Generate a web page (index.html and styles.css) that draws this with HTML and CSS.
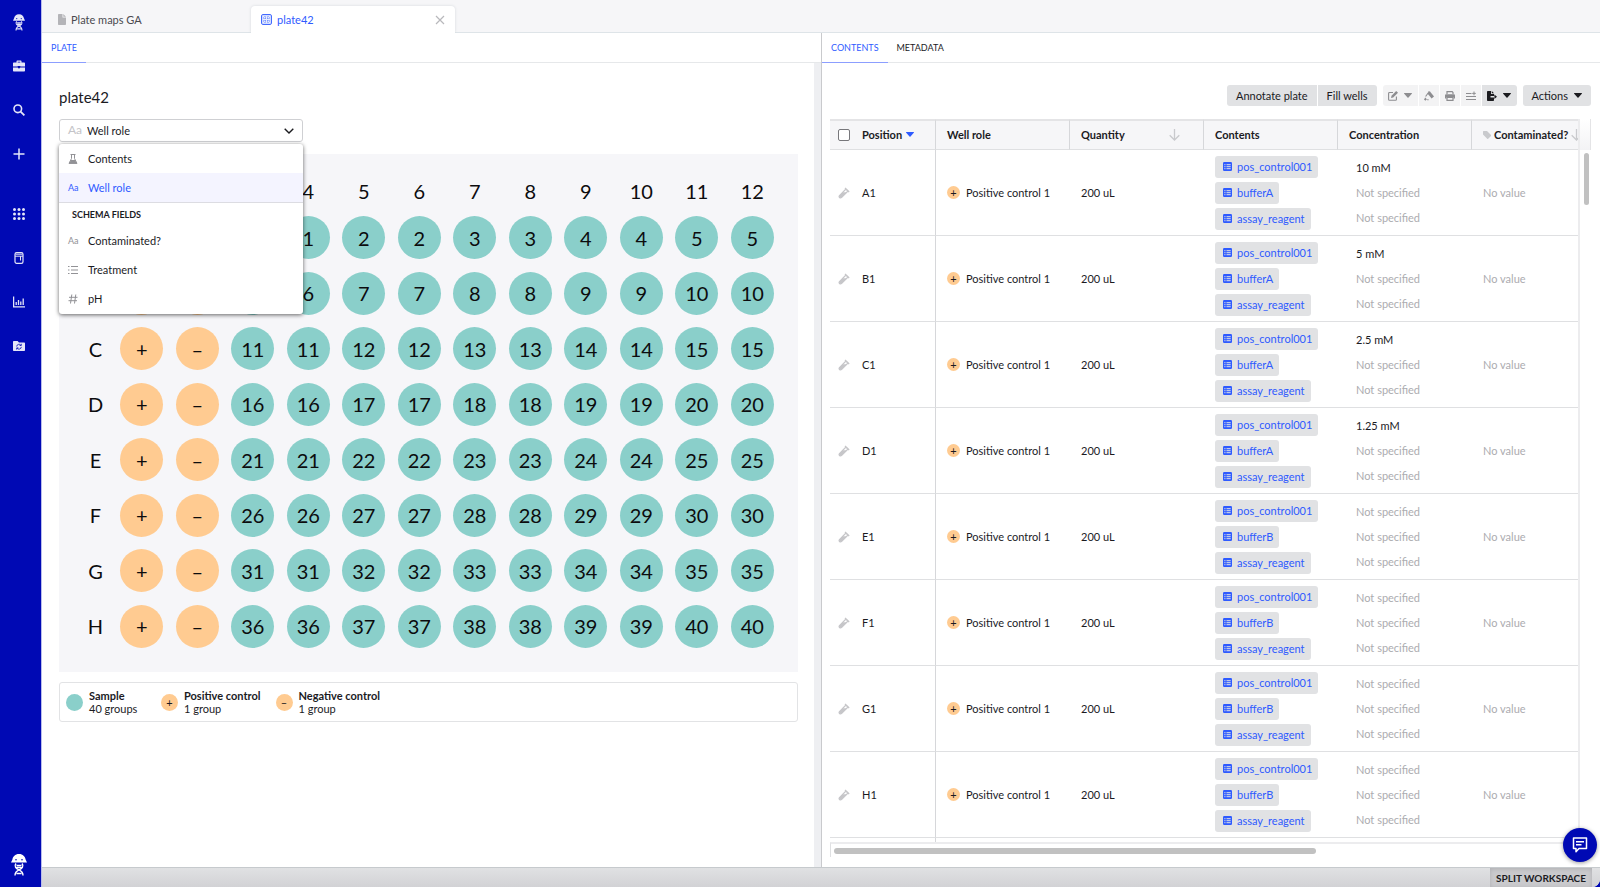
FILE: index.html
```
<!DOCTYPE html>
<html lang="en">
  <head>
    <meta charset="UTF-8" />
    <meta name="viewport" content="width=device-width, initial-scale=1" />
    <title>plate42</title>
    <link rel="stylesheet" href="styles.css">
  </head>
  <body>
    <!-- Icon sprite -->
    <svg class="sprite" aria-hidden="true">
      <symbol id="icon-jelly" viewBox="0 0 16 22">
        <path d="M8 0C4 0 2 2.600 1.400 5.400L0 8.600h16l-1.400-3.200C14 2.600 12 0 8 0z" fill="currentColor" />
        <circle cx="5" cy="5.800" r="0.800" fill="#0009b4" />
        <circle cx="11" cy="5.800" r="0.800" fill="#0009b4" />
        <path d="M5 9.500c-2.400 3 .2 5 3 6.300s4 2.700 4 5.700M11 9.500c2.400 3-.2 5-3 6.300s-4 2.700-4 5.700M5.500 11.500h5M5.500 13.500h5M5.500 19.500h5" fill="none" stroke="currentColor" stroke-width="1.400" />
      </symbol>
      <symbol id="icon-briefcase" viewBox="0 0 12 11">
        <path d="M3.500 2V1c0-.6.400-1 1-1h3c.6 0 1 .4 1 1v1H11c.6 0 1 .4 1 1v3H7.300V5.500H4.700V6H0V3c0-.6.400-1 1-1zM4.700 2h2.600v-.8H4.700zM0 7h4.700l1.300 1.200L7.300 7H12v3c0 .6-.4 1-1 1H1c-.6 0-1-.4-1-1z" fill="currentColor" />
      </symbol>
      <symbol id="icon-search" viewBox="0 0 12 12">
        <circle cx="4.800" cy="4.800" r="3.800" fill="none" stroke="currentColor" stroke-width="1.600" />
        <path d="M7.600 7.600l3.800 3.800" stroke="currentColor" stroke-width="1.800" />
      </symbol>
      <symbol id="icon-plus" viewBox="0 0 12 12">
        <path d="M6 .5v11M.5 6h11" stroke="currentColor" stroke-width="1.500" />
      </symbol>
      <symbol id="icon-grid" viewBox="0 0 12 12">
        <g fill="currentColor">
          <circle cx="1.500" cy="1.500" r="1.500" /><circle cx="6" cy="1.500" r="1.500" /><circle cx="10.500" cy="1.500" r="1.500" />
          <circle cx="1.500" cy="6" r="1.500" /><circle cx="6" cy="6" r="1.500" /><circle cx="10.500" cy="6" r="1.500" />
          <circle cx="1.500" cy="10.500" r="1.500" /><circle cx="6" cy="10.500" r="1.500" /><circle cx="10.500" cy="10.500" r="1.500" />
        </g>
      </symbol>
      <symbol id="icon-fridge" viewBox="0 0 12 12">
        <rect x="2" y=".6" width="8" height="10.800" rx="1.600" fill="none" stroke="currentColor" stroke-width="1.200" />
        <path d="M2 4.200h8M7.500 4.200v4.300M2.500 2.200h7" fill="none" stroke="currentColor" />
      </symbol>
      <symbol id="icon-chart" viewBox="0 0 12 11">
        <path d="M.6 0v10.300H12M3.200 8.500V5.500M5.500 8.500V3.500M7.800 8.500V5M10.200 8.500V2" fill="none" stroke="currentColor" stroke-width="1.300" />
      </symbol>
      <symbol id="icon-folder" viewBox="0 0 12 11">
        <path d="M1 .5h3.600L6 2h5c.6 0 1 .4 1 1v6.500c0 .6-.4 1-1 1H1c-.6 0-1-.4-1-1v-8c0-.6.400-1 1-1z" fill="currentColor" />
        <path d="M3.700 6a2.300 2.300 0 0 1 4.200-1.200M8.300 6.400a2.300 2.300 0 0 1-4.200 1.200M8.300 3.300v1.700H6.600M3.700 9.100V7.400h1.700" fill="none" stroke="#0009b4" stroke-width=".8" />
      </symbol>
      <symbol id="icon-file" viewBox="0 0 8 11">
        <path d="M1 0h3.500v3.500H8V10c0 .6-.4 1-1 1H1c-.6 0-1-.4-1-1V1c0-.6.400-1 1-1zM5.300 0L8 2.700H5.300z" fill="currentColor" />
      </symbol>
      <symbol id="icon-plate" viewBox="0 0 11 11">
        <rect x=".6" y=".6" width="9.800" height="9.800" rx="1.200" fill="#e6ecff" stroke="currentColor" />
        <path d="M4 2v7M7 2v7M2 4h7M2 7h7" stroke="currentColor" stroke-width=".7" stroke-dasharray="1 1" />
      </symbol>
      <symbol id="icon-close" viewBox="0 0 10 10">
        <path d="M1 1l8 8M9 1L1 9" stroke="currentColor" stroke-width="1.200" />
      </symbol>
      <symbol id="icon-chevron" viewBox="0 0 10 6">
        <path d="M.7.7L5 5 9.300.7" fill="none" stroke="currentColor" stroke-width="1.400" />
      </symbol>
      <symbol id="icon-flask" viewBox="0 0 10 10">
        <path d="M2.500.5h5M3.500.5v4L1 9.400h8L6.500 4.500v-4" fill="none" stroke="currentColor" />
        <path d="M3 6h4l2 3.500H1z" fill="currentColor" />
      </symbol>
      <symbol id="icon-list" viewBox="0 0 10 10">
        <path d="M0 1.500h1.500M3 1.500h7M0 5h1.500M3 5h7M0 8.500h1.500M3 8.500h7" stroke="currentColor" stroke-width="1.100" />
      </symbol>
      <symbol id="icon-hash" viewBox="0 0 10 10">
        <path d="M3.800.5l-1.300 9M7.800.5l-1.300 9M1 3.300h8.500M.5 6.700H9" stroke="currentColor" />
      </symbol>
      <symbol id="icon-edit" viewBox="0 0 10 10">
        <path d="M5 1.500H1.500c-.5 0-.9.400-.9.900v6c0 .5.400.9.900.9h6c.5 0 .9-.4.900-.9V5.500" fill="none" stroke="currentColor" stroke-width="1.100" />
        <path d="M8.200 0L10 1.800 5.200 6.500l-2.200.5.500-2.200z" fill="currentColor" />
      </symbol>
      <symbol id="icon-caret" viewBox="0 0 8 5">
        <path d="M.5 0h7c.5 0 .6.400.3.700L4.500 4.600c-.3.300-.7.300-1 0L.2.700C-.1.400 0 0 .5 0z" fill="currentColor" />
      </symbol>
      <symbol id="icon-dropper" viewBox="0 0 10 10">
        <path d="M4.300.6C5 0 5.700.1 6.200.7L10 5.600 7.600 7.600 3.900 3z" fill="currentColor" />
        <path d="M4.300 1.800L1.600 5.500M0 8.200h2.800M1.400 6.800v2.800M3.200 8.800h1.400" fill="none" stroke="currentColor" stroke-width="1.100" />
      </symbol>
      <symbol id="icon-print" viewBox="0 0 10 10">
        <path d="M2 3V.6h5.200L8 1.500V3M2 6.500h6v2.900H2z" fill="none" stroke="currentColor" stroke-width="1.200" />
        <path d="M1.300 3.300h7.400c.7 0 1.300.5 1.300 1.200V7.500H8.500V6h-7v1.500H0v-3c0-.7.600-1.200 1.300-1.200z" fill="currentColor" />
      </symbol>
      <symbol id="icon-addrow" viewBox="0 0 10 10">
        <path d="M0 2.500h5.500M0 5.500h10M0 8.500h10M8 .5v3.800M6.200 2.400h3.600" stroke="currentColor" />
      </symbol>
      <symbol id="icon-export" viewBox="0 0 10 10">
        <path d="M.8 0H4v3h3v2H3.500v1.600H7V9.200c0 .5-.3.800-.8.800H.8C.3 10 0 9.700 0 9.200V.8C0 .3.300 0 .8 0zM4.800 0L7 2.200H4.800zM7.400 3.600L10 5.800 7.400 8z" fill="currentColor" />
      </symbol>
      <symbol id="icon-arrow" viewBox="0 0 11 12">
        <path d="M5.500 0v11M.7 6.300l4.800 4.700 4.800-4.700" fill="none" stroke="currentColor" stroke-width="1.300" />
      </symbol>
      <symbol id="icon-tag" viewBox="0 0 8 8">
        <path d="M.6 0H4l4 4c.3.300.3.600 0 .9L5.200 7.700c-.3.300-.7.300-1 0L0 3.600V.6C0 .3.300 0 .6 0z" fill="currentColor" />
      </symbol>
      <symbol id="icon-tube" viewBox="0 0 12 12">
        <path d="M7.200 1.300l3.500 3.500M8 2L1.700 8.300c-1.500 1.600.5 3.500 2 2L10 4" fill="none" stroke="currentColor" stroke-width="1.200" />
        <path d="M5 5.200h4L3.500 10.500c-1.500 1-3-.5-2-2z" fill="currentColor" />
        <path d="M7 .8l4.200 4.200" stroke="currentColor" stroke-width="1.200" />
      </symbol>
      <symbol id="icon-entity" viewBox="0 0 9 9">
        <rect width="9" height="9" rx="1.200" fill="currentColor" />
        <path d="M1.300 2.700h1.200M3.500 2.700h4.200M1.300 4.700h1.200M3.500 4.700h4.200M1.300 6.700h1.200M3.500 6.700h4.200" stroke="#e1e2e4" />
      </symbol>
      <symbol id="icon-chat" viewBox="0 0 16 16">
        <path d="M1.500 1h13v10.500H7L4 14.700v-3.200H1.500z" fill="none" stroke="currentColor" stroke-width="1.500" stroke-linejoin="round" />
        <path d="M4 4.800h8M4 7.700h5.500" stroke="currentColor" stroke-width="1.400" />
      </symbol>
    </svg>

    <div class="app">
      <nav class="sidebar">
        <a href="#home" aria-label="Home"><svg class="logo"><use href="#icon-jelly" /></svg></a>
        <a href="#projects" aria-label="Projects"><svg><use href="#icon-briefcase" /></svg></a>
        <a href="#search" aria-label="Search"><svg><use href="#icon-search" /></svg></a>
        <a href="#create" aria-label="Create"><svg><use href="#icon-plus" /></svg></a>
        <a href="#apps" aria-label="Applications" class="spaced"><svg><use href="#icon-grid" /></svg></a>
        <a href="#inventory" aria-label="Inventory"><svg><use href="#icon-fridge" /></svg></a>
        <a href="#insights" aria-label="Insights"><svg><use href="#icon-chart" /></svg></a>
        <a href="#registry" aria-label="Registry"><svg><use href="#icon-folder" /></svg></a>
        <a href="#account" aria-label="Account" class="account"><svg><use href="#icon-jelly" /></svg></a>
      </nav>

      <div class="workspace">
        <header class="file-tabs">
          <a href="#maps" class="file-tab"><svg class="icon-file"><use href="#icon-file" /></svg>Plate maps GA</a>
          <div class="file-tab active">
            <a href="#plate42"><svg class="icon-plate"><use href="#icon-plate" /></svg>plate42</a>
            <button class="close" aria-label="Close tab"><svg><use href="#icon-close" /></svg></button>
          </div>
        </header>

        <main class="panes">
          <section class="pane">
            <nav class="pane-tabs"><a href="#plate" class="active">PLATE</a></nav>
            <div class="plate-pane">
              <h1>plate42</h1>
              <div class="picker">
                <span class="aa" aria-hidden="true">Aa</span>
                <select id="colour-by" aria-label="Show on plate">
                  <option>Well role</option>
                </select>
                <svg class="chevron"><use href="#icon-chevron" /></svg>
                <div class="menu">
                  <button><svg><use href="#icon-flask" /></svg>Contents</button>
                  <button class="selected"><span class="aa">Aa</span>Well role</button>
                  <h2>SCHEMA FIELDS</h2>
                  <button><span class="aa">Aa</span>Contaminated?</button>
                  <button><svg><use href="#icon-list" /></svg>Treatment</button>
                  <button><svg><use href="#icon-hash" /></svg>pH</button>
                </div>
              </div>
              <div class="plate" id="plate"></div>
              <div class="legend">
                <div class="legend-item"><span class="dot sample"></span><p><b>Sample</b><br>40 groups</p></div>
                <div class="legend-item"><span class="dot">+</span><p><b>Positive control</b><br>1 group</p></div>
                <div class="legend-item"><span class="dot">–</span><p><b>Negative control</b><br>1 group</p></div>
              </div>
            </div>
          </section>

          <section class="pane right">
            <nav class="pane-tabs">
              <a href="#contents" class="active">CONTENTS</a>
              <a href="#metadata">METADATA</a>
            </nav>
            <div class="toolbar">
              <div class="group">
                <button>Annotate plate</button>
                <button>Fill wells</button>
              </div>
              <div class="group">
                <button class="off wide" aria-label="Edit"><svg><use href="#icon-edit" /></svg><svg class="caret"><use href="#icon-caret" /></svg></button>
                <button class="off" aria-label="Transfer"><svg><use href="#icon-dropper" /></svg></button>
                <button class="off" aria-label="Print"><svg><use href="#icon-print" /></svg></button>
                <button class="off" aria-label="Add rows"><svg><use href="#icon-addrow" /></svg></button>
                <button class="wide" aria-label="Export"><svg><use href="#icon-export" /></svg><svg class="caret"><use href="#icon-caret" /></svg></button>
              </div>
              <button>Actions<svg class="caret"><use href="#icon-caret" /></svg></button>
            </div>
            <div class="table-area">
              <div class="table-scroll">
                <table>
                  <thead>
                    <tr>
                      <th class="position"><div><input type="checkbox" aria-label="Select all wells" />Position<svg class="caret"><use href="#icon-caret" /></svg></div></th>
                      <th>Well role</th>
                      <th><div>Quantity<svg class="arrow"><use href="#icon-arrow" /></svg></div></th>
                      <th>Contents</th>
                      <th>Concentration</th>
                      <th><div><svg class="tag"><use href="#icon-tag" /></svg>Contaminated?<svg class="arrow"><use href="#icon-arrow" /></svg></div></th>
                    </tr>
                  </thead>
                  <tbody id="rows"></tbody>
                </table>
              </div>
              <div class="v-track"><div class="corner"></div><div class="v-thumb"></div></div>
            </div>
            <div class="h-track"><div class="h-thumb"></div></div>
          </section>
        </main>

        <footer class="status-bar"><button>SPLIT WORKSPACE</button></footer>
      </div>
    </div>
    <button class="chat" aria-label="Open chat"><svg><use href="#icon-chat" /></svg></button>

    <script>
      const plate = document.getElementById("plate");
      let cells = "<span></span>";
      for (let col = 1; col <= 12; col++) {
        // the first three headings sit under the open menu
        cells += `<span class="label">${col > 3 ? col : ""}</span>`;
      }
      "ABCDEFGH".split("").forEach((letter, r) => {
        const covered = r < 2;
        cells += `<span class="label">${covered ? "" : letter}</span>`;
        cells += `<span class="cell"><span class="well control">${covered ? "" : "+"}</span></span>`;
        cells += `<span class="cell"><span class="well control">${covered ? "" : "–"}</span></span>`;
        // each sample group fills two neighbouring wells
        for (let i = 0; i < 10; i++) {
          const group = r * 5 + Math.floor(i / 2) + 1;
          cells += `<span class="cell"><span class="well">${covered && i === 0 ? "" : group}</span></span>`;
        }
      });
      plate.innerHTML = cells;

      const wells = [
        { pos: "A1", buffer: "bufferA", conc: "10 mM" },
        { pos: "B1", buffer: "bufferA", conc: "5 mM" },
        { pos: "C1", buffer: "bufferA", conc: "2.5 mM" },
        { pos: "D1", buffer: "bufferA", conc: "1.25 mM" },
        { pos: "E1", buffer: "bufferB" },
        { pos: "F1", buffer: "bufferB" },
        { pos: "G1", buffer: "bufferB" },
        { pos: "H1", buffer: "bufferB" },
      ];

      function chip(name) {
        return `<a href="#${name}" class="chip"><svg><use href="#icon-entity" /></svg>${name}</a>`;
      }

      document.getElementById("rows").innerHTML = wells
        .map(
          (well) => `
        <tr>
          <td class="position"><div><svg class="tube"><use href="#icon-tube" /></svg>${well.pos}</div></td>
          <td><div><span class="dot small">+</span>Positive control 1</div></td>
          <td>200 uL</td>
          <td><div class="chips">${chip("pos_control001")}${chip(well.buffer)}${chip("assay_reagent")}</div></td>
          <td class="conc">
            <p class="${well.conc ? "" : "empty"}">${well.conc || "Not specified"}</p>
            <p class="empty">Not specified</p>
            <p class="empty">Not specified</p>
          </td>
          <td class="empty">No value</td>
        </tr>`
        )
        .join("") + `<tr class="next"><td class="position"></td><td></td><td></td><td></td><td></td><td></td></tr>`;
    </script>
  </body>
</html>
```
FILE: styles.css
```
* {
  margin: 0;
  padding: 0;
  box-sizing: border-box;
}
body {
  font-family: Lato, "Liberation Sans", sans-serif;
  font-size: 11px;
  color: #1b1b1f;
  background: #0009b4;
}
a {
  color: inherit;
  text-decoration: none;
}
button,
select {
  font: inherit;
  color: inherit;
  border: none;
  background: none;
  cursor: pointer;
}
svg {
  display: block;
  flex: none;
}
.sprite {
  position: absolute;
  width: 0;
  height: 0;
}

.app {
  display: flex;
  height: 100vh;
}

/* Sidebar */
.sidebar {
  width: 42px;
  padding: 0 3px 10px 0;
  display: flex;
  flex-direction: column;
  background: #0009b4;
  border-right: 1px solid #b9bcec;
  color: #e4e6f8;
}
.sidebar a {
  height: 44px;
  display: grid;
  place-items: center;
}
.sidebar svg {
  width: 12px;
  height: 12px;
}
.sidebar .logo {
  width: 12px;
  height: 17px;
}
.sidebar .spaced {
  margin-top: 16px;
}
.sidebar .account {
  margin-top: auto;
  height: 24px;
  color: white;
}
.sidebar .account svg {
  width: 16px;
  height: 22px;
}

.workspace {
  flex: 1;
  min-width: 0;
  display: flex;
  flex-direction: column;
  background: white;
  border-bottom-right-radius: 8px;
  overflow: hidden;
}

/* File tabs */
.file-tabs {
  height: 33px;
  flex: none;
  display: flex;
  align-items: flex-end;
  background: #f6f6f8;
  border-bottom: 1px solid #dee4e8;
}
.file-tab {
  width: 209px;
  height: 26px;
  padding: 0 16px;
  display: flex;
  align-items: center;
  color: #4a4a50;
}
.icon-file {
  width: 8px;
  height: 11px;
  margin-right: 5px;
  color: #b4b4b8;
}
.file-tab.active {
  width: 204px;
  height: 27px;
  margin-bottom: -1px;
  padding: 0 10px;
  justify-content: space-between;
  background: white;
  color: #2f5bff;
  border-radius: 4px 4px 0 0;
  box-shadow: 0 0 3px #d4d8dc;
  clip-path: inset(-4px -4px 0 -4px);
}
.file-tab.active a {
  display: flex;
  align-items: center;
}
.icon-plate {
  width: 11px;
  height: 11px;
  margin-right: 5px;
}
.close {
  color: #b8b8bc;
}
.close svg {
  width: 10px;
  height: 10px;
}

/* Panes */
.panes {
  flex: 1;
  min-height: 0;
  display: grid;
  grid-template-columns: 1fr 1fr;
}
.pane {
  min-width: 0;
  min-height: 0;
  display: flex;
  flex-direction: column;
}
.pane.right {
  border-left: 1px solid #c9cacd;
}
.pane-tabs {
  height: 30px;
  flex: none;
  display: flex;
  border-bottom: 1px solid #e6e8ea;
  font-size: 9px;
}
.pane-tabs a {
  height: 30px;
  padding: 0 9px;
  line-height: 30px;
}
.pane-tabs .active {
  color: #2f5bff;
  border-bottom: 1px solid #8c9eff;
}

.plate-pane {
  flex: 1;
  padding: 24px 16px 0 17px;
  border-right: 7px solid #eeeff2;
}
.plate-pane h1 {
  font-size: 15px;
  line-height: 20px;
  font-weight: normal;
}

.picker {
  position: relative;
  width: 244px;
  height: 23px;
  margin: 12px 0;
}
.picker select {
  width: 100%;
  height: 100%;
  padding: 0 27px;
  appearance: none;
  border: 1px solid #cfd0d3;
  border-radius: 3px;
  background: white;
}
.picker > .aa {
  position: absolute;
  left: 9px;
  top: 3px;
  font-size: 12px;
  color: #c4c4c8;
}
.chevron {
  position: absolute;
  right: 9px;
  top: 9px;
  width: 10px;
  height: 6px;
}
.menu {
  position: absolute;
  left: 0;
  right: 0;
  top: 25px;
  z-index: 2;
  padding-bottom: 1px;
  background: white;
  border-radius: 3px;
  box-shadow: 0 1px 4px rgba(0, 0, 0, 0.6);
}
.menu button {
  width: 100%;
  height: 29px;
  padding: 0 9px;
  display: flex;
  align-items: center;
  text-align: left;
}
.menu svg,
.menu .aa {
  width: 10px;
  height: 10px;
  margin-right: 10px;
  color: #929296;
}
.menu .aa {
  height: auto;
  font-size: 9px;
}
.menu .selected {
  height: 30px;
  background: #f4f4ff;
  border-bottom: 1px solid #dcdce2;
  color: #2f5bff;
}
.menu .selected .aa {
  color: #2f5bff;
}
.menu h2 {
  padding: 0 13px;
  font-size: 9px;
  line-height: 23px;
}

/* Plate map */
.plate {
  display: grid;
  grid-template-columns: 37px repeat(12, 1fr);
  grid-template-rows: 38px;
  padding: 18px;
  background: #f6f6f9;
  font-size: 20px;
  color: #0c0c0e;
}
.plate .label,
.plate .cell,
.well {
  display: grid;
  place-items: center;
}
.plate .cell {
  aspect-ratio: 1;
}
.well {
  width: 78%;
  aspect-ratio: 1;
  border-radius: 50%;
  background: #8acfca;
}
.well.control {
  background: #ffcb91;
}

.legend {
  margin-top: 10px;
  padding: 6px;
  display: flex;
  gap: 15px;
  border: 1px solid #e2e3e5;
  border-radius: 3px;
  line-height: 13px;
}
.legend-item {
  min-width: 80px;
  display: flex;
  align-items: center;
  gap: 6px;
}
.dot {
  width: 17px;
  height: 17px;
  flex: none;
  display: grid;
  place-items: center;
  border-radius: 50%;
  background: #ffcb91;
}
.dot.sample {
  background: #8acfca;
}
.dot.small {
  width: 13px;
  height: 13px;
  margin-right: 6px;
}

/* Toolbar */
.toolbar {
  display: flex;
  justify-content: flex-end;
  gap: 6px;
  padding: 22px 9px 13px;
}
.toolbar .group {
  display: flex;
  gap: 1px;
}
.toolbar button {
  height: 21px;
  padding: 0 9px;
  display: flex;
  align-items: center;
  background: #e1e2e4;
}
.toolbar > button,
.toolbar .group button:first-child {
  border-top-left-radius: 3px;
  border-bottom-left-radius: 3px;
}
.toolbar > button,
.toolbar .group button:last-child {
  border-top-right-radius: 3px;
  border-bottom-right-radius: 3px;
}
.toolbar svg {
  width: 10px;
  height: 10px;
}
.toolbar button[aria-label] {
  padding: 0 5px;
}
.toolbar .off {
  background: #f3f3f4;
  color: #8d8d90;
}
.toolbar .caret,
.position .caret {
  width: 8px;
  height: 5px;
  margin-left: 6px;
}
.toolbar .wide .caret {
  margin-right: 1px;
}

/* Contents table */
.table-area {
  flex: 1;
  min-height: 0;
  display: flex;
  margin: 0 9px 0 8px;
  overflow: hidden;
}
.table-scroll {
  flex: 1;
  overflow: hidden;
  border-right: 2px solid #ececee;
}
table {
  width: 776px;
  table-layout: fixed;
  border-collapse: separate;
  border-spacing: 0;
}
th,
td {
  padding: 0 11px;
  text-align: left;
  border-bottom: 1px solid #dfe0e2;
}
th {
  height: 31px;
  padding-bottom: 1px;
  background: #f6f6f8;
  border-top: 2px solid #e4e4e6;
  border-right: 1px solid #d6d7da;
}
td {
  height: 86px;
}
th div,
td div {
  display: flex;
  align-items: center;
}
.position {
  width: 106px;
  padding-left: 8px;
  padding-right: 8px;
  border-right: 1px solid #d6d7da;
}
.position input {
  width: 12px;
  height: 12px;
  margin-right: 12px;
  appearance: none;
  border: 1px solid #77777b;
  border-radius: 2px;
  background: white;
}
.position .caret {
  margin-left: 4px;
  color: #2f5bff;
}
.position .tube {
  width: 12px;
  height: 12px;
  margin-right: 12px;
  color: #c6c6c9;
}
.arrow {
  width: 11px;
  height: 12px;
  margin-left: auto;
  margin-right: 12px;
  color: #c9cacd;
}
.tag {
  width: 8px;
  height: 8px;
  margin-right: 3px;
  color: #c9cacd;
}
.tag ~ .arrow {
  margin: 0 0 0 3px;
}
td .chips {
  flex-direction: column;
  align-items: flex-start;
  gap: 4px;
}
.chip {
  height: 22px;
  padding: 0 6px 0 8px;
  display: flex;
  align-items: center;
  gap: 5px;
  background: #e1e2e4;
  border-radius: 3px;
  color: #2f5bff;
}
.chip svg {
  width: 9px;
  height: 9px;
}
td.conc {
  padding-left: 18px;
  line-height: 25px;
}
.empty {
  color: #acacb0;
}
.next td {
  height: 8px;
}
.v-track {
  width: 11px;
}
.corner {
  height: 31px;
  border-right: 1px solid #e4e4e6;
  background: linear-gradient(white, #f3f3f5);
}
.v-thumb {
  width: 5px;
  height: 52px;
  margin: 3px auto 0 4px;
  border-radius: 3px;
  background: #c1c1c1;
}
.h-track {
  margin: 0 20px 10px 8px;
  height: 15px;
  padding: 4px 4px 4px 3px;
  border-top: 2px solid #ececee;
  border-left: 1px solid #dfe0e2;
}
.h-thumb {
  width: 65%;
  height: 6px;
  border-radius: 3px;
  background: #c1c1c1;
}

/* Footer */
.status-bar {
  height: 20px;
  flex: none;
  display: flex;
  justify-content: flex-end;
  padding-right: 8px;
  background: linear-gradient(#e0e1e3, #d2d2d5);
  border-top: 1px solid #c6cacd;
}
.status-bar button {
  padding: 0 6px;
  font-weight: bold;
  font-size: 10px;
  background: #cacacd;
  box-shadow: inset 0 1px 4px #aeaeb2;
}
.chat {
  position: fixed;
  right: 3px;
  bottom: 25px;
  width: 34px;
  height: 34px;
  display: grid;
  place-items: center;
  border-radius: 50%;
  background: #0009b4;
  color: white;
  box-shadow: 0 1px 4px rgba(0, 0, 0, 0.4);
}
.chat svg {
  width: 16px;
  height: 16px;
}
```
